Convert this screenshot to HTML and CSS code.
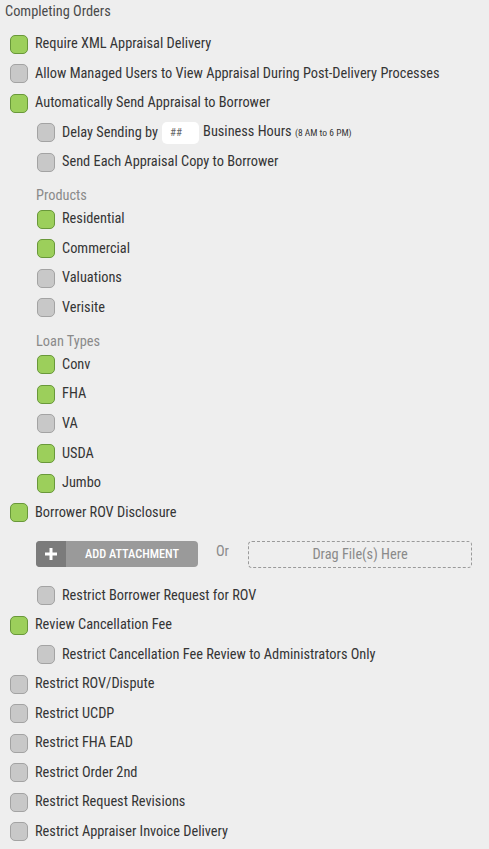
FILE: index.html
```html
<!DOCTYPE html>
<html>
<head>
<meta charset="utf-8">
<link rel="stylesheet" href="styles.css">
</head>
<body>
<div class="page">
  <div class="title">Completing Orders</div>

  <div class="opt on"><span class="cb"></span><span class="lbl">Require XML Appraisal Delivery</span></div>
  <div class="opt"><span class="cb"></span><span class="lbl">Allow Managed Users to View Appraisal During Post-Delivery Processes</span></div>
  <div class="opt on"><span class="cb"></span><span class="lbl">Automatically Send Appraisal to Borrower</span></div>

  <div class="group">
    <div class="opt"><span class="cb"></span><span class="lbl">Delay Sending by</span><span class="hours">##</span><span class="lbl">Business Hours <small class="note">(8 AM to 6 PM)</small></span></div>
    <div class="opt"><span class="cb"></span><span class="lbl">Send Each Appraisal Copy to Borrower</span></div>

    <div class="section">Products</div>
    <div class="opt on"><span class="cb"></span><span class="lbl">Residential</span></div>
    <div class="opt on"><span class="cb"></span><span class="lbl">Commercial</span></div>
    <div class="opt"><span class="cb"></span><span class="lbl">Valuations</span></div>
    <div class="opt"><span class="cb"></span><span class="lbl">Verisite</span></div>

    <div class="section">Loan Types</div>
    <div class="opt on"><span class="cb"></span><span class="lbl">Conv</span></div>
    <div class="opt on"><span class="cb"></span><span class="lbl">FHA</span></div>
    <div class="opt"><span class="cb"></span><span class="lbl">VA</span></div>
    <div class="opt on"><span class="cb"></span><span class="lbl">USDA</span></div>
    <div class="opt on"><span class="cb"></span><span class="lbl">Jumbo</span></div>
  </div>

  <div class="opt on"><span class="cb"></span><span class="lbl">Borrower ROV Disclosure</span></div>

  <div class="group">
    <div class="attach">
      <button class="btn"><span class="btn-icon"><svg width="14" height="14" viewBox="0 0 14 14"><path d="M7 1v12M1 7h12" stroke="#fff" stroke-width="3"/></svg></span><span class="btn-text">ADD ATTACHMENT</span></button>
      <span class="or">Or</span>
      <div class="drop">Drag File(s) Here</div>
    </div>
    <div class="opt"><span class="cb"></span><span class="lbl">Restrict Borrower Request for ROV</span></div>
  </div>

  <div class="opt on"><span class="cb"></span><span class="lbl">Review Cancellation Fee</span></div>
  <div class="group">
    <div class="opt"><span class="cb"></span><span class="lbl">Restrict Cancellation Fee Review to Administrators Only</span></div>
  </div>

  <div class="opt"><span class="cb"></span><span class="lbl">Restrict ROV/Dispute</span></div>
  <div class="opt"><span class="cb"></span><span class="lbl">Restrict UCDP</span></div>
  <div class="opt"><span class="cb"></span><span class="lbl">Restrict FHA EAD</span></div>
  <div class="opt"><span class="cb"></span><span class="lbl">Restrict Order 2nd</span></div>
  <div class="opt"><span class="cb"></span><span class="lbl">Restrict Request Revisions</span></div>
  <div class="opt"><span class="cb"></span><span class="lbl">Restrict Appraiser Invoice Delivery</span></div>
</div>
</body>
</html>
```

FILE: styles.css
```css
html, body {
  margin: 0;
  padding: 0;
  background: #eeeeee;
}
body {
  font-family: "Roboto Condensed", Roboto, "Liberation Sans", sans-serif;
  font-stretch: condensed;
  font-size: 14.35px;
  color: #353535;
}
.page {
  padding: 2px 0 0 5px;
}
.title {
  line-height: 20px;
  color: #4a4a4a;
  margin-bottom: 7.4px;
}
.opt {
  height: 29.55px;
  display: flex;
  align-items: center;
  padding-left: 5px;
}
.cb {
  box-sizing: border-box;
  width: 18px;
  height: 19px;
  border-radius: 5px;
  border: 1px solid #a3a3a3;
  background: #c8c8c8;
  margin-right: 7px;
  flex: none;
}
.opt.on .cb {
  background: #9ccf5b;
  border-color: #69983a;
}
.lbl {
  line-height: 18px;
  white-space: nowrap;
}
.note {
  font-size: 9.5px;
}
.hours {
  box-sizing: border-box;
  width: 37px;
  height: 22px;
  background: #fff;
  border-radius: 5px;
  margin: 0 4px 0 4px;
  font-size: 11px;
  color: #666;
  padding-left: 8px;
  line-height: 22px;
}
.group {
  padding-left: 27px;
}
.section {
  box-sizing: border-box;
  height: 27.4px;
  padding: 11px 0 0 4px;
  line-height: 16px;
  color: #8a8a8a;
}
.attach {
  display: flex;
  align-items: center;
  height: 53.4px;
  padding-left: 4px;
}
.btn {
  display: flex;
  padding: 0;
  border: none;
  border-radius: 4px;
  overflow: hidden;
  height: 26px;
  width: 162px;
  background: #9a9a9a;
  font-family: inherit;
  font-stretch: condensed;
  cursor: pointer;
}
.btn-icon {
  width: 30px;
  height: 26px;
  background: #7b7b7b;
  display: flex;
  align-items: center;
  justify-content: center;
}
.btn-text {
  flex: 1;
  line-height: 26px;
  color: #fff;
  font-size: 12.3px;
  font-weight: 500;
  text-align: center;
}
.or {
  margin-left: 18px;
  color: #8a8a8a;
  position: relative;
  top: -3px;
}
.drop {
  box-sizing: border-box;
  margin-left: 19px;
  width: 224px;
  height: 27px;
  border: 1px dashed #9a9a9a;
  border-radius: 4px;
  text-align: center;
  line-height: 25px;
  color: #8a8a8a;
}
```
